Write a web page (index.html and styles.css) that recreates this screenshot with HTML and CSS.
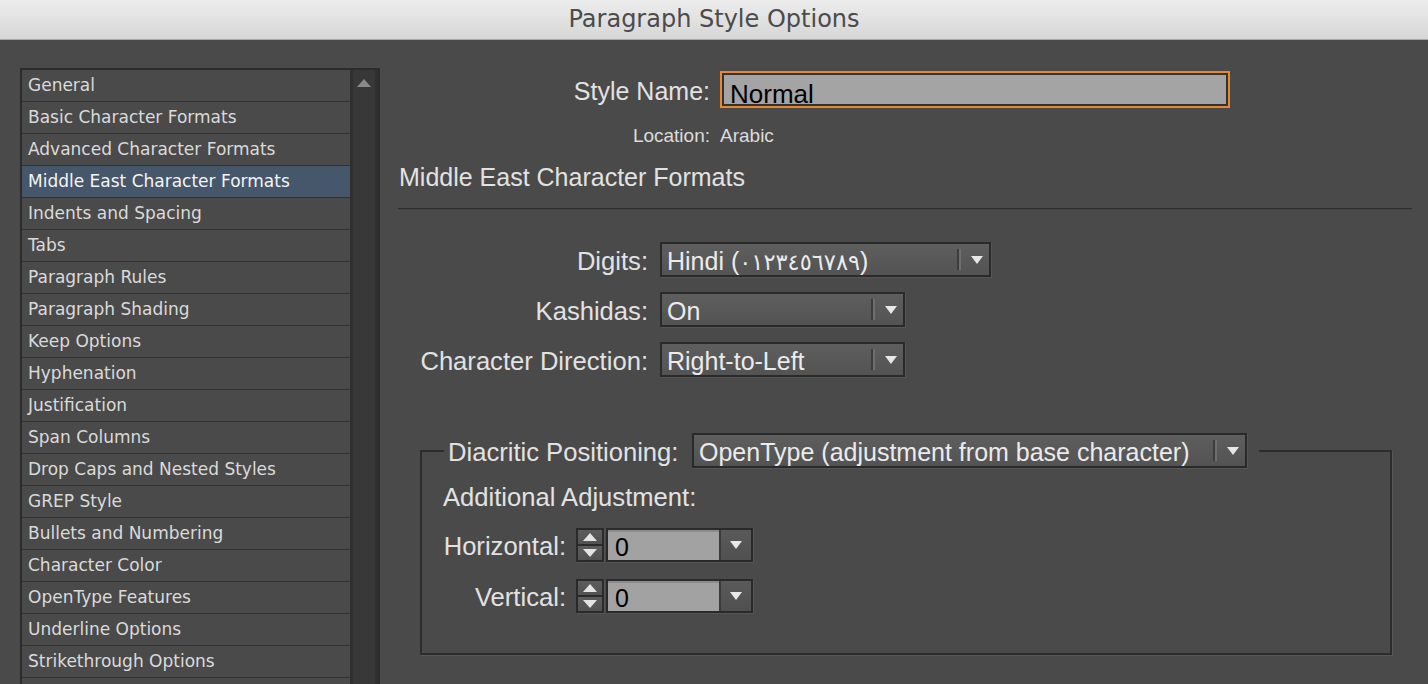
FILE: index.html
```html
<!DOCTYPE html>
<html lang="en">
<head>
<meta charset="utf-8">
<title>Paragraph Style Options</title>
<link rel="stylesheet" href="styles.css">
</head>
<body>
<header class="titlebar">Paragraph Style Options</header>
<div class="content">
  <aside class="sidebar">
    <ul class="list">
      <li class="item">General</li>
      <li class="item">Basic Character Formats</li>
      <li class="item">Advanced Character Formats</li>
      <li class="item selected">Middle East Character Formats</li>
      <li class="item">Indents and Spacing</li>
      <li class="item">Tabs</li>
      <li class="item">Paragraph Rules</li>
      <li class="item">Paragraph Shading</li>
      <li class="item">Keep Options</li>
      <li class="item">Hyphenation</li>
      <li class="item">Justification</li>
      <li class="item">Span Columns</li>
      <li class="item">Drop Caps and Nested Styles</li>
      <li class="item">GREP Style</li>
      <li class="item">Bullets and Numbering</li>
      <li class="item">Character Color</li>
      <li class="item">OpenType Features</li>
      <li class="item">Underline Options</li>
      <li class="item">Strikethrough Options</li>
      <li class="item"></li>
    </ul>
    <div class="scrolltrack"><span class="scroll-up"></span></div>
  </aside>

  <main class="panel">
    <div class="name-row">
      <span class="name-label">Style Name:</span>
      <div class="name-input"><span class="name-text">Normal</span></div>
    </div>
    <div class="loc-row">
      <span class="loc-label">Location:</span>
      <span class="loc-value">Arabic</span>
    </div>
    <h2 class="section-title">Middle East Character Formats</h2>
    <div class="divider"></div>

    <div class="form-row first">
      <span class="form-label">Digits:</span>
      <div class="select w-digits">
        <span class="select-value">Hindi (<span class="arabic">٠١٢٣٤٥٦٧٨٩</span>)</span>
        <span class="select-sep"></span>
        <span class="select-arrow"></span>
      </div>
    </div>
    <div class="form-row">
      <span class="form-label">Kashidas:</span>
      <div class="select w-short">
        <span class="select-value">On</span>
        <span class="select-sep"></span>
        <span class="select-arrow"></span>
      </div>
    </div>
    <div class="form-row">
      <span class="form-label">Character Direction:</span>
      <div class="select w-short">
        <span class="select-value">Right-to-Left</span>
        <span class="select-sep"></span>
        <span class="select-arrow"></span>
      </div>
    </div>

    <fieldset class="group">
      <legend class="group-legend">
        <span class="group-label">Diacritic Positioning:</span>
        <div class="select w-wide">
          <span class="select-value">OpenType (adjustment from base character)</span>
          <span class="select-sep"></span>
          <span class="select-arrow"></span>
        </div>
      </legend>
      <div class="sub-title">Additional Adjustment:</div>
      <div class="num-row">
        <span class="num-label">Horizontal:</span>
        <div class="spinner">
          <span class="spin-half"><span class="tri-up"></span></span>
          <span class="spin-half"><span class="tri-down"></span></span>
        </div>
        <div class="num-field">
          <span class="num-value">0</span>
          <span class="num-btn"><span class="select-arrow"></span></span>
        </div>
      </div>
      <div class="num-row second">
        <span class="num-label">Vertical:</span>
        <div class="spinner">
          <span class="spin-half"><span class="tri-up"></span></span>
          <span class="spin-half"><span class="tri-down"></span></span>
        </div>
        <div class="num-field">
          <span class="num-value">0</span>
          <span class="num-btn"><span class="select-arrow"></span></span>
        </div>
      </div>
    </fieldset>
  </main>
</div>
</body>
</html>
```

FILE: styles.css
```css
* { box-sizing: border-box; }

html, body {
  margin: 0;
  padding: 0;
}

body {
  width: 1428px;
  height: 684px;
  overflow: hidden;
  background: #4a4a4a;
  font-family: "Liberation Sans", Arial, sans-serif;
  color: #e2e2e2;
}

.titlebar {
  height: 40px;
  background: linear-gradient(#ededed, #d6d6d6);
  border-bottom: 1px solid #a8a8a8;
  text-align: center;
  font-family: "DejaVu Sans", sans-serif;
  font-size: 24px;
  line-height: 38px;
  color: #4b4b4b;
}

.content {
  display: flex;
  height: 644px;
  padding: 0 0 0 20px;
}

/* ---------- sidebar list ---------- */
.sidebar {
  width: 360px;
  height: 616px;
  margin-top: 28px;
  flex-shrink: 0;
  display: flex;
  border: 2px solid #2c2c2c;
  border-bottom: none;
  background: #2f2f2f;
  overflow: hidden;
}

.list {
  list-style: none;
  margin: 0;
  padding: 0;
  width: 328px;
  background: #4a4a4a;
}

.item {
  height: 32px;
  border-bottom: 1px solid #323232;
  padding-left: 6px;
  font-family: "DejaVu Sans", sans-serif;
  font-size: 17px;
  line-height: 31px;
  color: #dadada;
  white-space: nowrap;
}

.item.selected {
  background: #46566b;
  color: #f4f4f4;
}

.scrolltrack {
  width: 22px;
  margin: 0 3px;
  background: #383838;
  display: flex;
  justify-content: center;
}

.scroll-up {
  width: 0;
  height: 0;
  margin-top: 9px;
  border-left: 7px solid transparent;
  border-right: 7px solid transparent;
  border-bottom: 8px solid #8a8a8a;
}

/* ---------- right panel ---------- */
.panel {
  flex: 1;
  display: flex;
  flex-direction: column;
  padding: 0 16px 0 18px;
}

.name-row {
  display: flex;
  align-items: center;
  margin-top: 31px;
}

.name-label {
  width: 312px;
  margin-right: 10px;
  padding-top: 3px;
  text-align: right;
  font-size: 25px;
}

.name-input {
  width: 510px;
  height: 37px;
  border: 2px solid #e8892f;
  background: #a4a4a4;
  box-shadow: inset 0 0 0 2px #333;
  padding-left: 8px;
  display: flex;
  align-items: flex-end;
}

.name-text {
  font-size: 26px;
  line-height: 24px;
  color: #000;
}

.loc-row {
  display: flex;
  align-items: center;
  margin-top: 17px;
  font-size: 19px;
  line-height: 22px;
  color: #dcdcdc;
}

.loc-label {
  width: 312px;
  margin-right: 10px;
  text-align: right;
}

.section-title {
  margin: 15px 0 0 1px;
  font-weight: normal;
  font-size: 25px;
  line-height: 30px;
  color: #e2e2e2;
}

.divider {
  margin-top: 16px;
  border-top: 1px solid #2e2e2e;
  border-bottom: 1px solid #434343;
}

.form-row {
  display: flex;
  align-items: center;
  margin-top: 15px;
}

.form-row.first {
  margin-top: 32px;
}

.form-label {
  width: 250px;
  margin-right: 12px;
  padding-top: 3px;
  text-align: right;
  font-size: 25.6px;
  white-space: nowrap;
}

/* ---------- dropdowns ---------- */
.select {
  display: flex;
  align-items: center;
  height: 35px;
  border: 2px solid #2a2a2a;
  background: linear-gradient(#5e5e5e, #535353);
  box-shadow: 1px 1px 0 #555;
  padding-left: 5px;
  flex-shrink: 0;
}

.w-digits { width: 331px; }
.w-short { width: 245px; }
.w-wide { width: 555px; }

.select-value {
  flex: 1;
  padding-top: 3px;
  font-family: "Liberation Sans", "DejaVu Sans", sans-serif;
  font-size: 25px;
  line-height: 28px;
  color: #ebebeb;
  white-space: nowrap;
  overflow: hidden;
}

.arabic {
  font-family: "DejaVu Sans", sans-serif;
  font-size: 22.5px;
}

.select-sep {
  width: 4px;
  height: 21px;
  border-left: 2px solid #3c3c3c;
  border-right: 2px solid #6e6e6e;
  margin-right: 10px;
}

.select-arrow {
  width: 0;
  height: 0;
  border-left: 6.5px solid transparent;
  border-right: 6.5px solid transparent;
  border-top: 8px solid #e8e8e8;
  margin-right: 6px;
}

/* ---------- group box ---------- */
.group {
  margin: 56px 20px 0 22px;
  padding: 0 0 40px 21px;
  border: 2px solid #2c2c2c;
  box-shadow: 1px 1px 0 #575757;
  min-width: 0;
}

.group-legend {
  display: flex;
  align-items: center;
  margin-left: 1px;
  padding: 0 12px 0 4px;
}

.group-label {
  width: 244px;
  padding-top: 3px;
  font-size: 25.6px;
  white-space: nowrap;
}

.sub-title {
  margin-top: 15px;
  font-size: 25.6px;
  line-height: 28px;
}

.num-row {
  display: flex;
  align-items: center;
  margin-top: 17px;
}

.num-row.second {
  margin-top: 17px;
}

.num-label {
  width: 123px;
  margin-right: 10px;
  padding-top: 3px;
  text-align: right;
  font-size: 25.6px;
  white-space: nowrap;
}

.spinner {
  width: 28px;
  height: 34px;
  border: 2px solid #2a2a2a;
  display: flex;
  flex-direction: column;
  background: #2a2a2a;
  gap: 2px;
  box-shadow: 1px 1px 0 #555;
}

.spin-half {
  flex: 1;
  background: linear-gradient(#5c5c5c, #525252);
  display: flex;
  align-items: center;
  justify-content: center;
}

.tri-up {
  width: 0;
  height: 0;
  border-left: 7px solid transparent;
  border-right: 7px solid transparent;
  border-bottom: 8px solid #e4e4e4;
}

.tri-down {
  width: 0;
  height: 0;
  border-left: 7px solid transparent;
  border-right: 7px solid transparent;
  border-top: 8px solid #e4e4e4;
}

.num-field {
  display: flex;
  width: 147px;
  height: 34px;
  margin-left: 2px;
  border: 2px solid #2a2a2a;
  box-shadow: 1px 1px 0 #555;
}

.num-value {
  width: 111px;
  background: #a2a2a2;
  box-shadow: inset 0 2px 0 #8c8c8c;
  padding-left: 7px;
  padding-top: 2px;
  font-size: 25px;
  line-height: 30px;
  color: #000;
}

.num-btn {
  flex: 1;
  display: flex;
  align-items: center;
  justify-content: center;
  background: linear-gradient(#5a5a5a, #505050);
  border-left: 2px solid #3a3a3a;
}

.num-btn .select-arrow {
  margin-right: 0;
}
```
